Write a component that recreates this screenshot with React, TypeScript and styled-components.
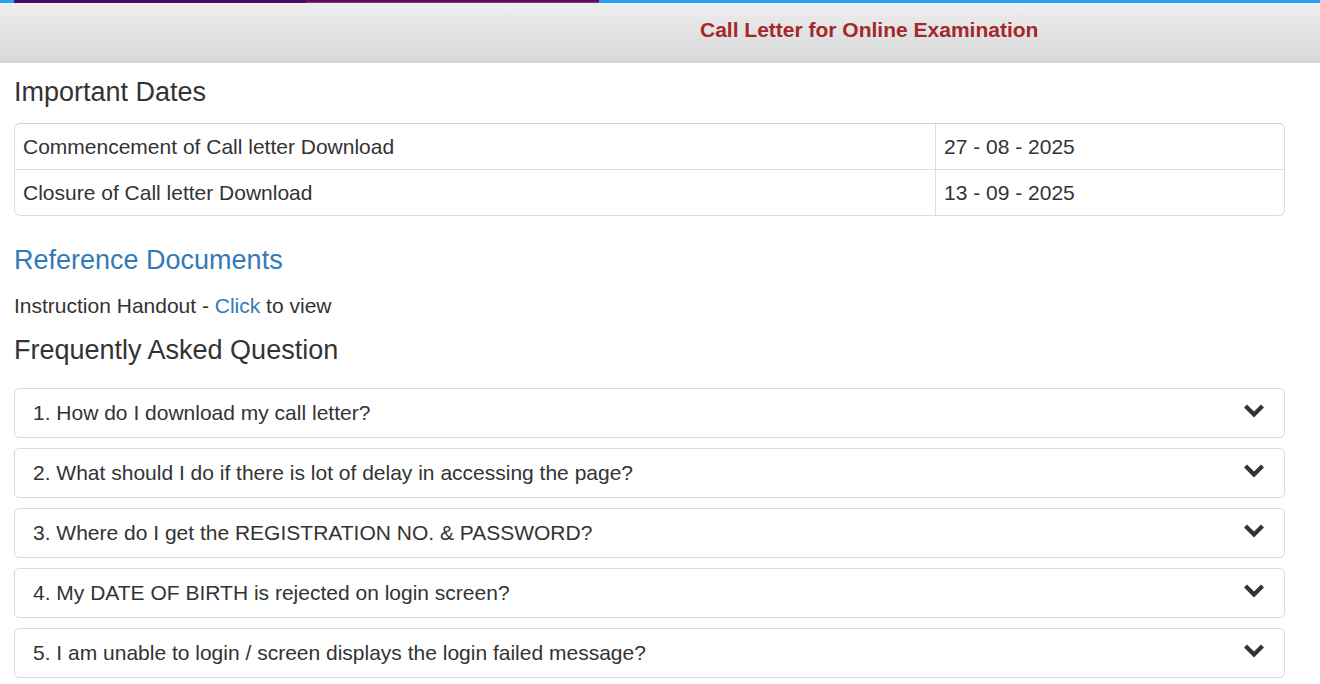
import React from "react";
import styled, { createGlobalStyle } from "styled-components";

const GlobalStyle = createGlobalStyle`
  html, body { margin: 0; padding: 0; background: #fff; }
  body {
    font-family: "Liberation Sans", Arial, Helvetica, sans-serif;
    color: #333;
    font-size: 21px;
  }
  * { box-sizing: border-box; }
`;

const Page = styled.div`
  width: 1320px;
  height: 684px;
  overflow: hidden;
  background: #fff;
`;

const TopStrip = styled.div`
  display: grid;
  grid-template-columns: 14px 292px 293px 1fr;
  height: 3px;
`;

const StripPart = styled.div<{ $color: string; $edge?: string }>`
  background: ${(p) => p.$color};
  box-shadow: ${(p) => (p.$edge ? `inset 0 -1px 0 ${p.$edge}` : "none")};
`;

const Header = styled.header`
  display: grid;
  grid-template-columns: 700px 1fr;
  align-items: center;
  height: 60px;
  padding-bottom: 6px;
  background: linear-gradient(to bottom, #efeeef 0%, #d7d7d7 100%);
`;

const HeaderTitle = styled.h1`
  grid-column: 2;
  margin: 0;
  font-size: 21px;
  font-weight: bold;
  color: #a3282b;
  line-height: 24px;
`;

const Content = styled.main`
  width: 1285px;
  padding-left: 14px;
`;

const SectionTitle = styled.h2<{ $top: number; $bottom: number; $link?: boolean }>`
  margin: ${(p) => p.$top}px 0 ${(p) => p.$bottom}px;
  font-size: 27px;
  font-weight: normal;
  line-height: 30px;
  color: ${(p) => (p.$link ? "#337ab7" : "#333")};
`;

const DatesCard = styled.div`
  border: 1px solid #dcdcdc;
  border-top-color: #cfcfcf;
  border-radius: 6px;
  overflow: hidden;
`;

const DateRow = styled.div`
  display: grid;
  grid-template-columns: 920px 1fr;
  height: 46px;
  & + & { border-top: 1px solid #ddd; height: 46px; }
  &:first-child { height: 45px; }
`;

const DateCell = styled.div<{ $divider?: boolean }>`
  display: flex;
  align-items: center;
  padding: 0 8px;
  line-height: 30px;
  border-left: ${(p) => (p.$divider ? "1px solid #ddd" : "none")};
`;

const InfoLine = styled.p`
  margin: 16px 0 0;
  line-height: 30px;
`;

const Link = styled.a`
  color: #337ab7;
  text-decoration: none;
`;

const FaqList = styled.div`
  display: flex;
  flex-direction: column;
  gap: 10px;
`;

const FaqPanel = styled.div`
  display: flex;
  align-items: center;
  justify-content: space-between;
  height: 50px;
  padding: 0 20px 0 18px;
  border: 1px solid #dadada;
  border-radius: 5px;
  background: #fff;
  line-height: 24px;
`;

const FaqText = styled.span`
  color: #333;
`;

const Chevron = () => (
  <svg width="20" height="14" viewBox="0 0 20 14" aria-hidden="true">
    <polyline
      points="3,3.5 10,10.5 17,3.5"
      fill="none"
      stroke="#333"
      strokeWidth="4.2"
      strokeLinecap="square"
      strokeLinejoin="miter"
    />
  </svg>
);

const ChevronWrap = styled.span`
  display: flex;
  align-items: center;
  margin-top: -5px;
`;

const dates = [
  ["Commencement of Call letter Download", "27 - 08 - 2025"],
  ["Closure of Call letter Download", "13 - 09 - 2025"],
];

const faqs = [
  "1. How do I download my call letter?",
  "2. What should I do if there is lot of delay in accessing the page?",
  "3. Where do I get the REGISTRATION NO. & PASSWORD?",
  "4. My DATE OF BIRTH is rejected on login screen?",
  "5. I am unable to login / screen displays the login failed message?",
];

export default function App() {
  return (
    <Page>
      <GlobalStyle />
      <TopStrip>
        <StripPart $color="#2b9ff5" />
        <StripPart $color="#4e0a5c" />
        <StripPart $color="#5a0c60" $edge="#7a3a80" />
        <StripPart $color="#2b9ff5" />
      </TopStrip>
      <Header>
        <HeaderTitle>Call Letter for Online Examination</HeaderTitle>
      </Header>
      <Content>
        <SectionTitle $top={14} $bottom={16}>Important Dates</SectionTitle>
        <DatesCard>
          {dates.map(([label, value]) => (
            <DateRow key={label}>
              <DateCell>{label}</DateCell>
              <DateCell $divider>{value}</DateCell>
            </DateRow>
          ))}
        </DatesCard>
        <SectionTitle $top={29} $bottom={0} $link>Reference Documents</SectionTitle>
        <InfoLine>
          Instruction Handout - <Link href="#">Click</Link> to view
        </InfoLine>
        <SectionTitle $top={14} $bottom={23}>Frequently Asked Question</SectionTitle>
        <FaqList>
          {faqs.map((q) => (
            <FaqPanel key={q}>
              <FaqText>{q}</FaqText>
              <ChevronWrap>
                <Chevron />
              </ChevronWrap>
            </FaqPanel>
          ))}
        </FaqList>
      </Content>
    </Page>
  );
}
